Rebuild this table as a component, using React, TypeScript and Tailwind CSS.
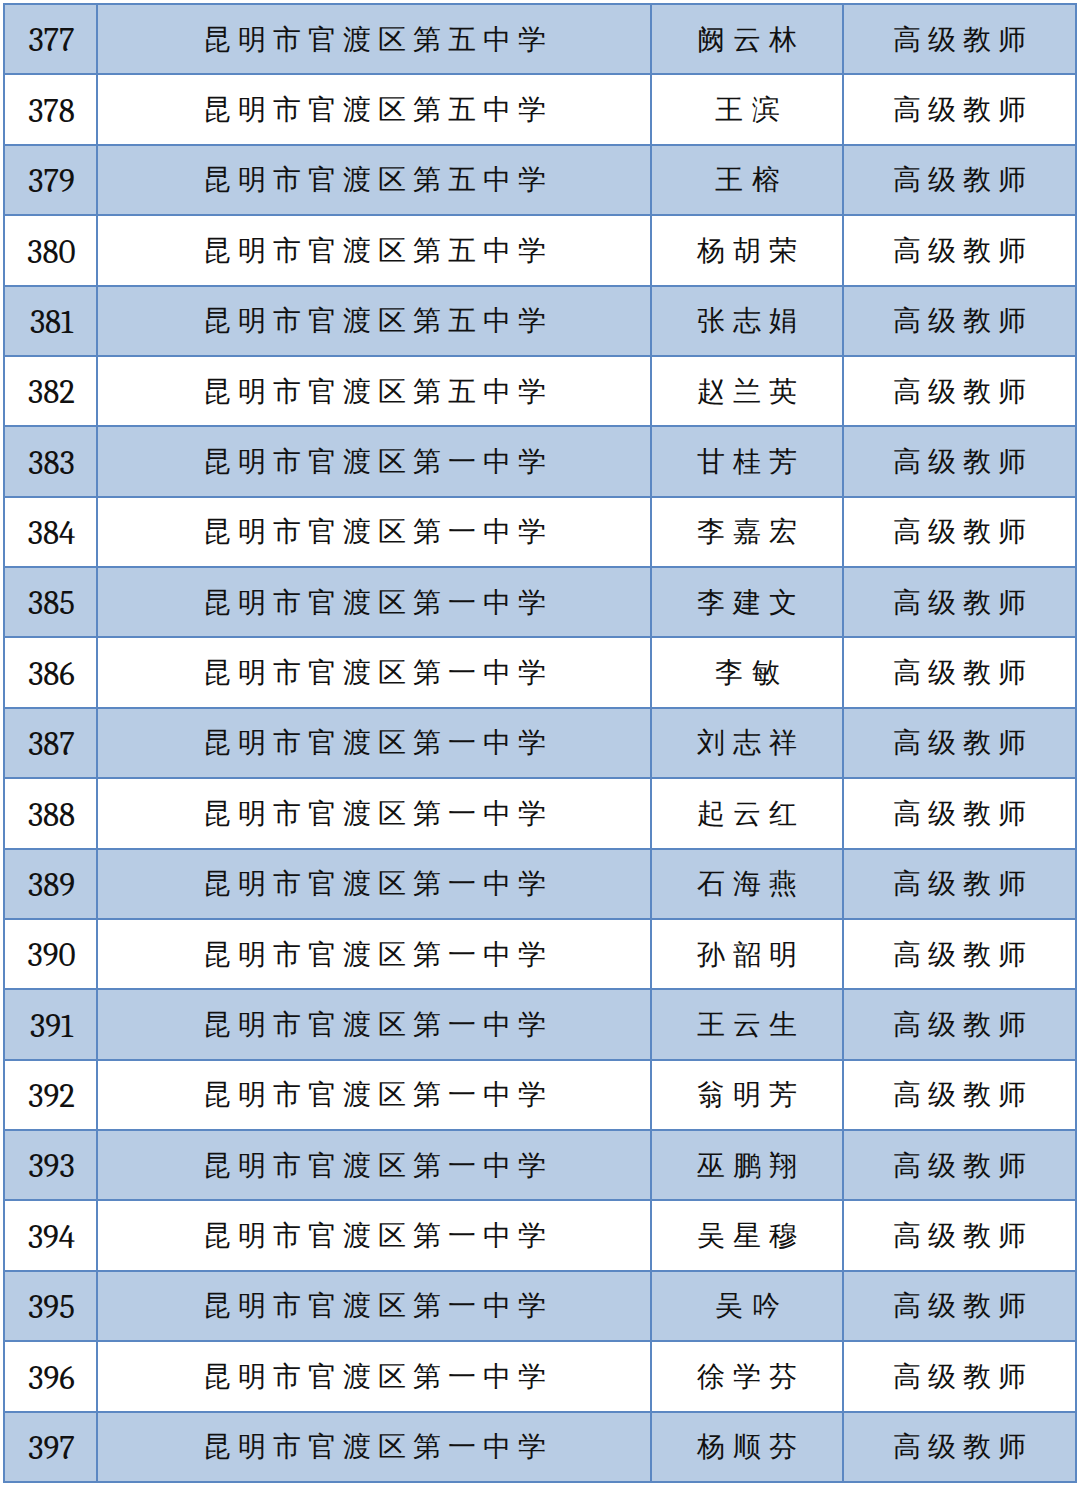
const rows: [number, string, string][] = [
  [377, "昆明市官渡区第五中学", "阙云林"],
  [378, "昆明市官渡区第五中学", "王滨"],
  [379, "昆明市官渡区第五中学", "王榕"],
  [380, "昆明市官渡区第五中学", "杨胡荣"],
  [381, "昆明市官渡区第五中学", "张志娟"],
  [382, "昆明市官渡区第五中学", "赵兰英"],
  [383, "昆明市官渡区第一中学", "甘桂芳"],
  [384, "昆明市官渡区第一中学", "李嘉宏"],
  [385, "昆明市官渡区第一中学", "李建文"],
  [386, "昆明市官渡区第一中学", "李敏"],
  [387, "昆明市官渡区第一中学", "刘志祥"],
  [388, "昆明市官渡区第一中学", "起云红"],
  [389, "昆明市官渡区第一中学", "石海燕"],
  [390, "昆明市官渡区第一中学", "孙韶明"],
  [391, "昆明市官渡区第一中学", "王云生"],
  [392, "昆明市官渡区第一中学", "翁明芳"],
  [393, "昆明市官渡区第一中学", "巫鹏翔"],
  [394, "昆明市官渡区第一中学", "吴星穆"],
  [395, "昆明市官渡区第一中学", "吴吟"],
  [396, "昆明市官渡区第一中学", "徐学芬"],
  [397, "昆明市官渡区第一中学", "杨顺芬"],
];

const cjk = "font-serif font-light text-[28px] tracking-[7px] pl-[7px]";

export default function App() {
  return (
    <div className="w-[1080px] h-[1486px] bg-white pt-[3px] pl-[3px]">
      <div className="flex h-[1480px] w-[1074px] flex-col border-2 border-[#5b87c2] text-[#111]">
        {rows.map(([no, school, name], i) => (
          <div
            key={no}
            className={`grid flex-1 grid-cols-[91px_2px_552px_2px_190px_2px_231px] ${i > 0 ? "border-t-2 border-[#5b87c2]" : ""} ${i % 2 === 0 ? "bg-[#b8cce4]" : "bg-white"}`}
          >
            <div className="flex items-center justify-center pt-[4px] pl-[2px] font-serif text-[33px]">{no}</div>
            <div className="bg-[#5b87c2]" />
            <div className={`flex items-center justify-center pt-[1px] ${cjk}`}>{school}</div>
            <div className="bg-[#5b87c2]" />
            <div className={`flex items-center justify-center pt-[1px] ${cjk} ${name.length === 2 ? "tracking-[9px] pl-[9px]" : "tracking-[8px] pl-[8px]"}`}>{name}</div>
            <div className="bg-[#5b87c2]" />
            <div className={`flex items-center justify-center pt-[1px] ${cjk}`}>高级教师</div>
          </div>
        ))}
      </div>
    </div>
  );
}
